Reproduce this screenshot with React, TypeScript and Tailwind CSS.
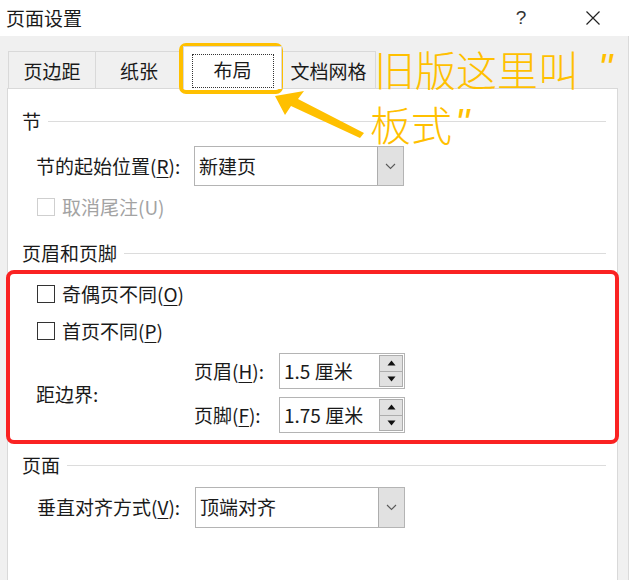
import React from "react";

function Check({ label, disabled }: { label: React.ReactNode; disabled?: boolean }) {
  return (
    <div className="flex h-[24px] items-center">
      <span
        className={
          "block h-[18px] w-[18px] bg-white border-[1.5px] " +
          (disabled ? "border-[#cfcfcf]" : "border-[#333333]")
        }
      />
      <span className={"ml-[7px] leading-[24px] " + (disabled ? "text-[#a3a3a3]" : "text-[#1a1a1a]")}>
        {label}
      </span>
    </div>
  );
}

function Header({ text }: { text: string }) {
  return (
    <div className="flex h-[24px] items-center gap-[7px]">
      <span className="leading-[24px] text-[#1a1a1a]">{text}</span>
      <span className="h-px flex-1 bg-[#dcdcdc]" />
    </div>
  );
}

function Dropdown({ value, h }: { value: string; h: string }) {
  return (
    <div className={"flex w-[210px] border-[1.5px] border-[#b4b4b4] bg-white " + h}>
      <div className="flex flex-1 items-center pl-[4px] text-[#1a1a1a]">{value}</div>
      <div className="flex w-[26px] items-center justify-center border-l-[1.5px] border-[#adadad] bg-[#e1e1e1]">
        <svg width="11" height="7" viewBox="0 0 11 7">
          <path d="M1 1 L5.5 5.5 L10 1" fill="none" stroke="#5a5a5a" strokeWidth="1.1" />
        </svg>
      </div>
    </div>
  );
}

function Spin({ value }: { value: string }) {
  return (
    <div className="flex h-[36px] w-[126px] border-[1.5px] border-[#b4b4b4] bg-white">
      <div className="flex flex-1 items-center pl-[4px] text-[#1a1a1a]">{value}</div>
      <div className="my-[1px] mr-[1px] flex w-[24px] flex-col">
        <div className="flex flex-1 items-center justify-center border border-[#adadad] bg-[#e1e1e1]">
          <svg width="9" height="6" viewBox="0 0 9 6">
            <path d="M0.5 5.5 L4.5 0.5 L8.5 5.5 Z" fill="#111" />
          </svg>
        </div>
        <div className="flex flex-1 items-center justify-center border border-t-0 border-[#adadad] bg-[#e1e1e1]">
          <svg width="9" height="6" viewBox="0 0 9 6">
            <path d="M0.5 0.5 L4.5 5.5 L8.5 0.5 Z" fill="#111" />
          </svg>
        </div>
      </div>
    </div>
  );
}

const U = ({ c }: { c: string }) => <span className="underline underline-offset-[3px] decoration-1">{c}</span>;

export default function App() {
  return (
    <div className="relative h-[580px] w-[631px] overflow-hidden bg-white font-['Noto_Sans_CJK_SC','Noto_Sans',sans-serif] text-[19px] text-[#1a1a1a]">
      {/* title bar */}
      <div className="flex h-[36px] items-center bg-white pl-[6px]">
        <span className="leading-[24px] text-[#1a1a1a]">页面设置</span>
        <div className="flex-1" />
        <span className="flex w-[30px] justify-center font-['Liberation_Sans',sans-serif] text-[19px] text-[#333]">?</span>
        <div className="w-[42px]" />
        <span className="flex w-[30px] justify-center">
          <svg width="14" height="14" viewBox="0 0 14 14">
            <path d="M0.5 0.5 L13.5 13.5 M13.5 0.5 L0.5 13.5" stroke="#222" strokeWidth="1.2" />
          </svg>
        </span>
        <div className="w-[23px]" />
      </div>

      {/* body */}
      <div className="flex h-[544px]">
        <div className="w-[628px] bg-[#f0f0f0] pt-[10px]">
          {/* tabs */}
          <div className="flex h-[42px] items-end pl-[8px]">
            <div className="flex h-[37px] w-[88px] items-center justify-center border border-b-0 border-[#d9d9d9] bg-[#f0f0f0] pt-[2px]">
              页边距
            </div>
            <div className="flex h-[37px] w-[87px] items-center justify-center border border-b-0 border-l-0 border-[#d9d9d9] bg-[#f0f0f0] pt-[2px]">
              纸张
            </div>
            <div className="relative z-10 mb-[-1px] flex h-[43px] w-[99px] items-center justify-center border border-b-0 border-[#d9d9d9] bg-white">
              <div className="mt-[5px] flex h-[34px] w-[82px] items-center justify-center border border-dotted border-[#333]">
                布局
              </div>
            </div>
            <div className="flex h-[37px] w-[94px] items-center justify-center border border-b-0 border-l-0 border-[#d9d9d9] bg-[#f0f0f0] pt-[2px]">
              文档网格
            </div>
          </div>

          {/* panel */}
          <div className="ml-[7px] h-[500px] w-[611px] border border-[#d9d9d9] bg-white pl-[14px] pr-[11px] pt-[20px]">
            <Header text="节" />
            <div className="ml-[14px] mt-[13px] flex items-center">
              <span className="w-[158px]">
                节的起始位置(<U c="R" />):
              </span>
              <Dropdown value="新建页" h="h-[40px]" />
            </div>
            <div className="ml-[15px] mt-[9px]">
              <Check disabled label="取消尾注(U)" />
            </div>

            <div className="mt-[22px]">
              <Header text="页眉和页脚" />
            </div>
            <div className="ml-[15px] mt-[17px]">
              <Check
                label={
                  <>
                    奇偶页不同(<U c="O" />)
                  </>
                }
              />
            </div>
            <div className="ml-[15px] mt-[13px]">
              <Check
                label={
                  <>
                    首页不同(<U c="P" />)
                  </>
                }
              />
            </div>
            <div className="ml-[14px] mt-[10px] flex items-center">
              <span className="w-[158px] pt-[2px]">距边界:</span>
              <div className="flex flex-col gap-[8px]">
                <div className="flex items-center">
                  <span className="w-[85px]">
                    页眉(<U c="H" />):
                  </span>
                  <Spin value="1.5 厘米" />
                </div>
                <div className="flex items-center">
                  <span className="w-[85px]">
                    页脚(<U c="F" />):
                  </span>
                  <Spin value="1.75 厘米" />
                </div>
              </div>
            </div>

            <div className="mt-[20px]">
              <Header text="页面" />
            </div>
            <div className="ml-[15px] mt-[10px] flex items-center">
              <span className="w-[158px]">
                垂直对齐方式(<U c="V" />):
              </span>
              <Dropdown value="顶端对齐" h="h-[41px]" />
            </div>
          </div>
        </div>
        <div className="w-px bg-[#dadada]" />
        <div className="flex-1 bg-white" />
      </div>

      {/* annotations */}
      <div className="pointer-events-none absolute left-[179px] top-[43px] h-[51px] w-[104px] rounded-[7px] border-[4px] border-[#ffc000]" />
      <div className="pointer-events-none absolute left-[6px] top-[270px] h-[174px] w-[613px] rounded-[8px] border-[4px] border-[#fa2222]" />
      <svg className="pointer-events-none absolute left-0 top-0" width="631" height="580">
        <polygon points="275,96 304,91 298,99 364,133 360,138 291,106 285,115" fill="#ffc000" />
      </svg>
      <div className="pointer-events-none absolute left-[374px] top-[47px] whitespace-nowrap text-[41px] font-light leading-[42px] text-[#ffc000]">
        旧版这里叫
      </div>
      <div className="pointer-events-none absolute left-[598px] top-[47px] font-['Liberation_Sans',sans-serif] text-[40px] leading-[42px] text-[#ffc000] italic">
        "
      </div>
      <div className="pointer-events-none absolute left-[370px] top-[102px] whitespace-nowrap text-[41px] font-light leading-[42px] text-[#ffc000]">
        板式
      </div>
      <div className="pointer-events-none absolute left-[455px] top-[102px] font-['Liberation_Sans',sans-serif] text-[40px] leading-[42px] text-[#ffc000] italic">
        "
      </div>
    </div>
  );
}
